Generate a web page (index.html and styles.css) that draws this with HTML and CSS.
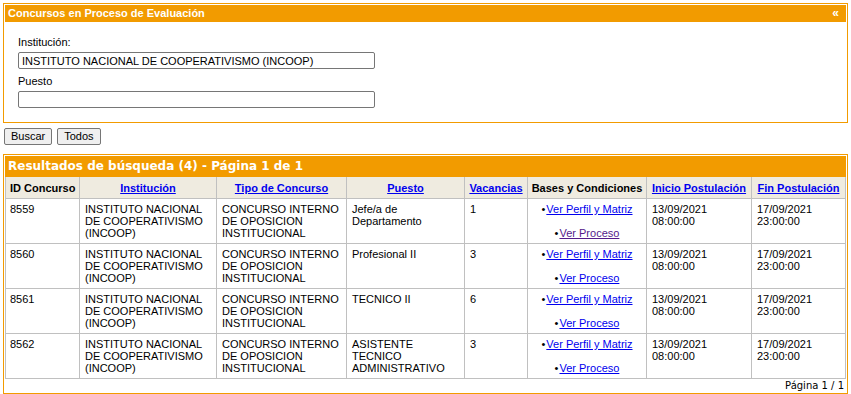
FILE: index.html
```html
<!DOCTYPE html>
<html lang="es">
<head>
<meta charset="utf-8">
<title>Concursos en Proceso de Evaluación</title>
<link rel="stylesheet" href="styles.css">
</head>
<body>
<div class="page">
  <div class="panel search">
    <div class="panel-head">
      <span>Concursos en Proceso de Evaluación</span>
      <span class="collapse">«</span>
    </div>
    <div class="form">
      <label class="lbl">Institución:</label>
      <input class="field" type="text" value="INSTITUTO NACIONAL DE COOPERATIVISMO (INCOOP)">
      <label class="lbl lbl2">Puesto</label>
      <input class="field" type="text" value="">
    </div>
  </div>

  <div class="actions">
    <button class="btn">Buscar</button>
    <button class="btn">Todos</button>
  </div>

  <div class="panel results">
    <div class="results-head">Resultados de búsqueda (4) - Página 1 de 1</div>
    <table class="grid">
      <colgroup>
        <col class="c1"><col class="c2"><col class="c3"><col class="c4">
        <col class="c5"><col class="c6"><col class="c7"><col class="c8">
      </colgroup>
      <thead>
        <tr>
          <th>ID Concurso</th>
          <th><a href="#">Institución</a></th>
          <th><a href="#">Tipo de Concurso</a></th>
          <th><a href="#">Puesto</a></th>
          <th><a href="#">Vacancias</a></th>
          <th>Bases y Condiciones</th>
          <th><a href="#">Inicio Postulación</a></th>
          <th><a href="#">Fin Postulación</a></th>
        </tr>
      </thead>
      <tbody>
        <tr>
          <td>8559</td>
          <td>INSTITUTO NACIONAL DE COOPERATIVISMO (INCOOP)</td>
          <td>CONCURSO INTERNO DE OPOSICION INSTITUCIONAL</td>
          <td>Jefe/a de Departamento</td>
          <td>1</td>
          <td class="links"><div class="lk"><span class="dot">•</span><a href="#">Ver Perfil y Matriz</a></div><div class="lk lk2"><span class="dot">•</span><a href="#" class="visited">Ver Proceso</a></div></td>
          <td>13/09/2021 08:00:00</td>
          <td>17/09/2021 23:00:00</td>
        </tr>
        <tr>
          <td>8560</td>
          <td>INSTITUTO NACIONAL DE COOPERATIVISMO (INCOOP)</td>
          <td>CONCURSO INTERNO DE OPOSICION INSTITUCIONAL</td>
          <td>Profesional II</td>
          <td>3</td>
          <td class="links"><div class="lk"><span class="dot">•</span><a href="#">Ver Perfil y Matriz</a></div><div class="lk lk2"><span class="dot">•</span><a href="#">Ver Proceso</a></div></td>
          <td>13/09/2021 08:00:00</td>
          <td>17/09/2021 23:00:00</td>
        </tr>
        <tr>
          <td>8561</td>
          <td>INSTITUTO NACIONAL DE COOPERATIVISMO (INCOOP)</td>
          <td>CONCURSO INTERNO DE OPOSICION INSTITUCIONAL</td>
          <td>TECNICO II</td>
          <td>6</td>
          <td class="links"><div class="lk"><span class="dot">•</span><a href="#">Ver Perfil y Matriz</a></div><div class="lk lk2"><span class="dot">•</span><a href="#">Ver Proceso</a></div></td>
          <td>13/09/2021 08:00:00</td>
          <td>17/09/2021 23:00:00</td>
        </tr>
        <tr>
          <td>8562</td>
          <td>INSTITUTO NACIONAL DE COOPERATIVISMO (INCOOP)</td>
          <td>CONCURSO INTERNO DE OPOSICION INSTITUCIONAL</td>
          <td>ASISTENTE TECNICO ADMINISTRATIVO</td>
          <td>3</td>
          <td class="links"><div class="lk"><span class="dot">•</span><a href="#">Ver Perfil y Matriz</a></div><div class="lk lk2"><span class="dot">•</span><a href="#">Ver Proceso</a></div></td>
          <td>13/09/2021 08:00:00</td>
          <td>17/09/2021 23:00:00</td>
        </tr>
      </tbody>
    </table>
    <div class="pager">Página 1 / 1</div>
  </div>
</div>
</body>
</html>
```

FILE: styles.css
```css
html, body {
  margin: 0;
  padding: 0;
  background: #ffffff;
}

body {
  font-family: "Liberation Sans", Arial, sans-serif;
  font-size: 11px;
  color: #000;
}

.page {
  padding: 3px 3px 0 3px;
  width: 845px;
}

.panel {
  border: 1px solid #f29b00;
  padding: 1px;
}

.panel-head {
  background: #f29b00;
  color: #fff;
  font-weight: bold;
  font-size: 11px;
  height: 17px;
  line-height: 17px;
  padding: 0 7px 0 3px;
  display: flex;
  justify-content: space-between;
  align-items: center;
}

.collapse {
  font-size: 12px;
  font-weight: bold;
  line-height: 17px;
}

.form {
  display: flex;
  flex-direction: column;
  align-items: flex-start;
  padding: 14px 0 13px 13px;
}

.lbl {
  display: block;
  font-size: 11px;
  line-height: 13px;
  height: 13px;
  margin-bottom: 3px;
}

.lbl2 {
  margin-top: 6px;
}

.field {
  box-sizing: border-box;
  width: 357px;
  height: 17px;
  margin: 0;
  padding: 0 3px;
  border: 1px solid #767676;
  border-radius: 2px;
  font-family: "Liberation Sans", Arial, sans-serif;
  font-size: 11px;
  color: #000;
  background: #fff;
}

.actions {
  display: flex;
  gap: 5px;
  padding: 5px 0 0 1px;
  margin-bottom: 9px;
}

.btn {
  box-sizing: border-box;
  height: 17px;
  padding: 0 6px;
  margin: 0;
  border: 1px solid #767676;
  border-radius: 2px;
  background: #efefef;
  font-family: "Liberation Sans", Arial, sans-serif;
  font-size: 11px;
  color: #000;
  line-height: 15px;
}

.results-head {
  background: #f29b00;
  color: #fff;
  font-family: "DejaVu Sans", Verdana, sans-serif;
  font-weight: bold;
  font-size: 12px;
  height: 21px;
  line-height: 21px;
  padding-left: 3px;
}

.grid {
  width: 840px;
  border-collapse: collapse;
  table-layout: fixed;
  font-size: 11px;
  line-height: 12px;
}

.c1 { width: 74px; }
.c2 { width: 137px; }
.c3 { width: 130px; }
.c4 { width: 118px; }
.c5 { width: 63px; }
.c6 { width: 119px; }
.c7 { width: 105px; }
.c8 { width: 94px; }

.grid th {
  background: #efebe0;
  border: 1px solid #c0c0c0;
  border-top: none;
  padding: 4px 2px;
  height: 13px;
  font-weight: bold;
  text-align: center;
  white-space: nowrap;
  color: #000;
}

.grid th:first-child {
  text-align: left;
  padding-left: 4px;
}

.grid td {
  border: 1px solid #c0c0c0;
  padding: 4px 5px;
  height: 36px;
  vertical-align: top;
  text-align: left;
  color: #000;
}

.grid td:first-child {
  padding-left: 4px;
}

.grid a {
  color: #0000ee;
  text-decoration: underline;
}

.grid a.visited {
  color: #551a8b;
}

.grid td.links {
  text-align: center;
  padding-left: 2px;
  padding-right: 2px;
}

.lk {
  height: 12px;
  line-height: 12px;
}

.lk2 {
  margin-top: 12px;
}

.dot {
  margin-right: 1px;
}

.pager {
  font-family: "DejaVu Sans", Verdana, sans-serif;
  font-size: 10px;
  line-height: 13px;
  text-align: right;
  padding-right: 2px;
  color: #000;
}
```
